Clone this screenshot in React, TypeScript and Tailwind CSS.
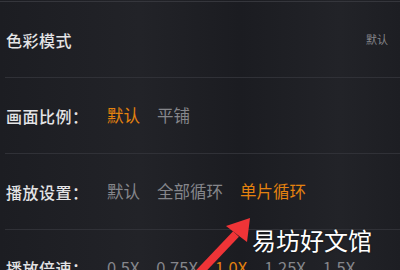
const font = "font-['Noto_Sans_CJK_SC','Noto_Sans',sans-serif]";

type Opt = { text: string; active?: boolean };

function Row({ label, options, right }: { label: string; options?: Opt[]; right?: string }) {
  return (
    <div className="h-[76px] ml-[5px] border-b border-[#303137] flex items-center">
      <div className="w-[102px] pl-[1px] text-[16px] font-medium text-[#e4e4e6] tracking-[0.5px]">{label}</div>
      {options && (
        <div className="flex items-center gap-[17px] text-[16.5px]">
          {options.map((o) => (
            <span key={o.text} className={o.active ? "text-[#e4820f]" : "text-[#85868b]"}>
              {o.text}
            </span>
          ))}
        </div>
      )}
      {right && <div className="ml-auto mr-[12px] text-[11px] text-[#85868b]">{right}</div>}
    </div>
  );
}

export default function App() {
  return (
    <div className={`${font} relative w-[400px] h-[270px] overflow-hidden bg-[#1d1e23] bg-[linear-gradient(90deg,#1c1d22_0%,#222328_35%,#1b1c21_60%,#222328_85%,#1d1e23_100%)]`}>
      <div className="h-[1px] bg-[#35363c] mt-[1px]" />
      <Row label="色彩模式" right="默认" />
      <Row
        label="画面比例："
        options={[{ text: "默认", active: true }, { text: "平铺" }]}
      />
      <Row
        label="播放设置："
        options={[{ text: "默认" }, { text: "全部循环" }, { text: "单片循环", active: true }]}
      />
      <Row
        label="播放倍速："
        options={[
          { text: "0.5X" },
          { text: "0.75X" },
          { text: "1.0X", active: true },
          { text: "1.25X" },
          { text: "1.5X" },
        ]}
      />

      {/* arrow overlay */}
      <svg className="absolute left-0 top-0" width="400" height="270" viewBox="0 0 400 270">
        <line x1="198" y1="274" x2="236" y2="234" stroke="#ef3437" strokeWidth="8" />
        <polygon points="250,218 226,226 247,242" fill="#ef3437" />
      </svg>

      {/* watermark */}
      <div className="absolute left-[252px] top-[225px] text-[24px] leading-[30px] text-white [text-shadow:0_0_2px_rgba(0,0,0,0.6)]">
        易坊好文馆
      </div>
    </div>
  );
}
